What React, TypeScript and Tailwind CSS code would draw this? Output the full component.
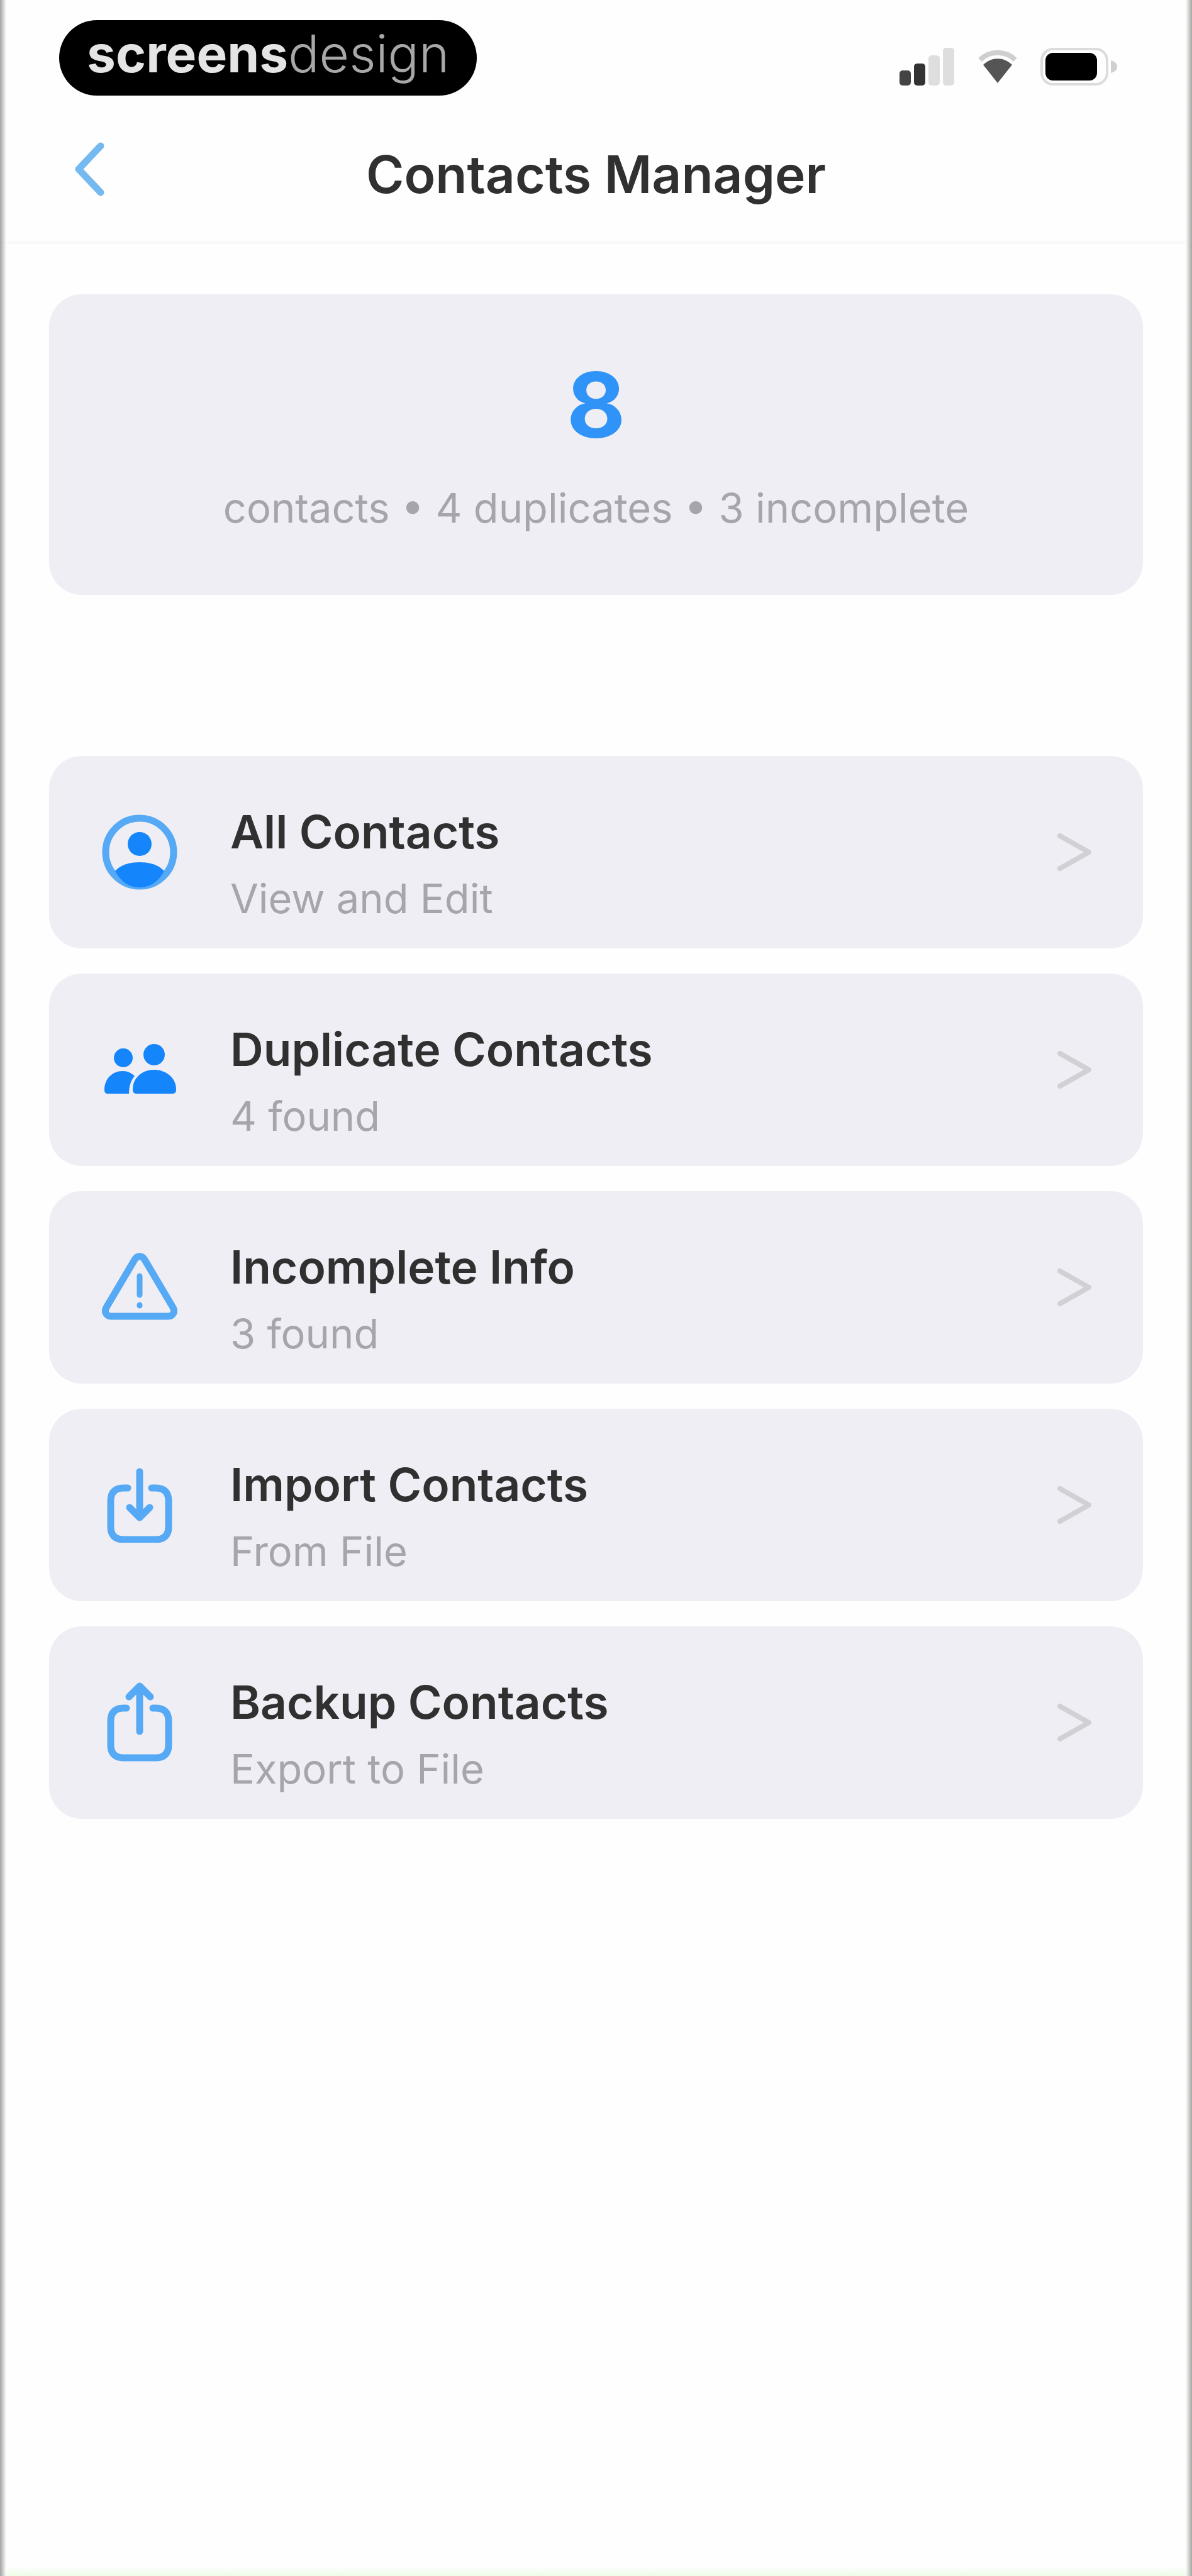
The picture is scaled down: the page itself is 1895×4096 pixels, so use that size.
import type { ReactNode } from 'react';

const stroke = {
  fill: 'none',
  stroke: '#55a9f5',
  strokeWidth: 11,
  strokeLinecap: 'round',
  strokeLinejoin: 'round',
} as const

function PersonIcon() {
  return (
    <svg viewBox="0 0 120 120" className="size-30 shrink-0" aria-hidden="true">
      <circle cx="60" cy="60" r="54" {...stroke} />
      <circle cx="60" cy="47" r="19" fill="#1585fc" />
      <path d="M21 90C30 80 44 76 60 76s30 4 39 14c-9 17-22 26-39 26s-30-9-39-26Z" fill="#1585fc" />
    </svg>
  )
}

function PeopleIcon() {
  return (
    <svg viewBox="0 0 120 120" className="size-30 shrink-0" fill="#1585fc" aria-hidden="true">
      <circle cx="34" cy="41" r="15" />
      <circle cx="83" cy="36" r="17" />
      <path d="M4 92c0-18 13-30 29-30 8 0 14 3 19 8-6 7-9 16-9 28H9c-3 0-5-2-5-6Z" />
      <path d="M49 91c0-18 15-31 34-31s35 13 35 31c0 5-2 7-6 7H55c-4 0-6-2-6-7Z" />
    </svg>
  )
}

function WarningIcon() {
  return (
    <svg viewBox="0 0 120 120" className="size-30 shrink-0" aria-hidden="true">
      <path d="M52 16c4-7 12-7 16 0l45 76c4 7 0 14-8 14H15c-8 0-12-7-8-14Z" {...stroke} />
      <path d="M60 42v30M60 88v1" {...stroke} strokeWidth="9" />
    </svg>
  )
}

function ImportIcon() {
  return (
    <svg viewBox="0 0 120 120" className="size-30 shrink-0" aria-hidden="true">
      <path d="M41 33H34c-13 0-20 7-20 20v42c0 13 7 20 20 20h52c13 0 20-7 20-20V53c0-13-7-20-20-20h-7" {...stroke} />
      <path d="M60 7v70M44 64l16 16 16-16" {...stroke} />
    </svg>
  )
}

function ExportIcon() {
  return (
    <svg viewBox="0 0 120 120" className="size-30 shrink-0 overflow-visible" aria-hidden="true">
      <path d="M39 37H34c-13 0-20 7-20 20v39c0 13 7 20 20 20h52c13 0 20-7 20-20V57c0-13-7-20-20-20h-5" {...stroke} />
      <path d="M60 74V5M43 19L60 2l17 17" {...stroke} />
    </svg>
  )
}

function StatusIcons() {
  return (
    <div className="flex items-center gap-9">
      <svg viewBox="0 0 90 60" className="h-[60px] w-[90px]" aria-label="Signal">
        <rect x="2" y="36" width="18" height="24" rx="5" fill="#444" />
        <rect x="25" y="25" width="18" height="35" rx="5" fill="#333" />
        <rect x="48" y="12" width="18" height="48" rx="5" fill="#dedede" />
        <rect x="71" y="0" width="18" height="60" rx="5" fill="#dedede" />
      </svg>
      <svg viewBox="0 0 64 56" className="h-14 w-16" aria-label="Wi-Fi">
        <path d="M4 17C20 2 44 2 60 17" fill="none" stroke="#cfcfcf" strokeWidth="8" />
        <path d="M9 25c14-13 32-13 46 0L32 54Z" fill="#555" />
      </svg>
      <svg viewBox="0 0 124 60" className="h-[60px] w-[124px]" aria-label="Battery">
        <rect x="2" y="2" width="104" height="56" rx="18" fill="none" stroke="#dcdcdc" strokeWidth="4" />
        <rect x="8" y="8" width="82" height="44" rx="12" fill="#000" />
        <path d="M112 20c7 2 10 5 10 10s-3 8-10 10Z" fill="#d0d0d0" />
      </svg>
    </div>
  )
}

const items: { title: string; detail: string; icon: ReactNode }[] = [
  { title: 'All Contacts', detail: 'View and Edit', icon: <PersonIcon /> },
  { title: 'Duplicate Contacts', detail: '4 found', icon: <PeopleIcon /> },
  { title: 'Incomplete Info', detail: '3 found', icon: <WarningIcon /> },
  { title: 'Import Contacts', detail: 'From File', icon: <ImportIcon /> },
  { title: 'Backup Contacts', detail: 'Export to File', icon: <ExportIcon /> },
]

export default function App() {
  return (
    <div className="flex min-h-screen bg-[#fefefe] font-['Inter',sans-serif]">
      <div className="w-[10px] shrink-0 bg-linear-to-r from-[#a3a3a3] to-[#fefefe]" />
      <div className="flex min-w-0 flex-1 flex-col">
        <div className="flex items-end justify-between pt-8 pr-[107px] pl-[84px]">
          <div className="flex h-30 items-center rounded-full bg-black px-11 pb-3 text-[82px] leading-none">
            <span className="font-bold text-[#e4e4e4]">screens</span>
            <span className="font-light text-[#a8a8a8]">design</span>
          </div>
          <div className="pb-4">
            <StatusIcons />
          </div>
        </div>

        <header className="grid h-[236px] grid-cols-[1fr_auto_1fr] items-center border-b-4 border-[#f8f8f8] px-[68px]">
          <button type="button" aria-label="Back" className="justify-self-start px-9">
            <svg viewBox="0 0 56 96" className="h-24 w-14" aria-hidden="true">
              <path d="M46 12L11 49l35 37" {...stroke} stroke="#74b9f0" />
            </svg>
          </button>
          <h1 className="pt-5 text-[82px] leading-24 font-semibold text-[#303030]">Contacts Manager</h1>
        </header>

        <main className="px-[68px] pt-20">
          <section className="flex flex-col items-center gap-9 rounded-[52px] bg-[#efeef4] pt-24 pb-[90px]">
            <p className="text-[144px] leading-40 font-bold text-[#2f93f8]">8</p>
            <p className="text-[65px] leading-24 text-[#a6a5ad]">contacts • 4 duplicates • 3 incomplete</p>
          </section>

          <nav className="mt-64 flex flex-col gap-10">
            {items.map((item) => (
              <button
                key={item.title}
                type="button"
                className="flex items-center gap-[84px] rounded-[52px] bg-[#efeef4] py-[33px] pr-[78px] pl-[84px] text-left"
              >
                {item.icon}
                <span className="flex flex-1 flex-col gap-3.5 pt-10 pb-0.5">
                  <span className="text-[73px] leading-24 font-semibold text-[#303030]">{item.title}</span>
                  <span className="text-[65px] leading-22 text-[#a6a5ad]">{item.detail}</span>
                </span>
                <svg viewBox="0 0 64 72" className="h-18 w-16 shrink-0" aria-hidden="true">
                  <path d="M10 10l46 26-46 26" {...stroke} strokeWidth="8" stroke="#d0d0d5" />
                </svg>
              </button>
            ))}
          </nav>
        </main>

        <div className="mt-auto h-4 bg-linear-to-b from-[#fefefe] to-[#eefde8]" />
      </div>
      <div className="w-[10px] shrink-0 bg-linear-to-l from-[#a2a8a0] to-[#fefefe]" />
    </div>
  );
}
